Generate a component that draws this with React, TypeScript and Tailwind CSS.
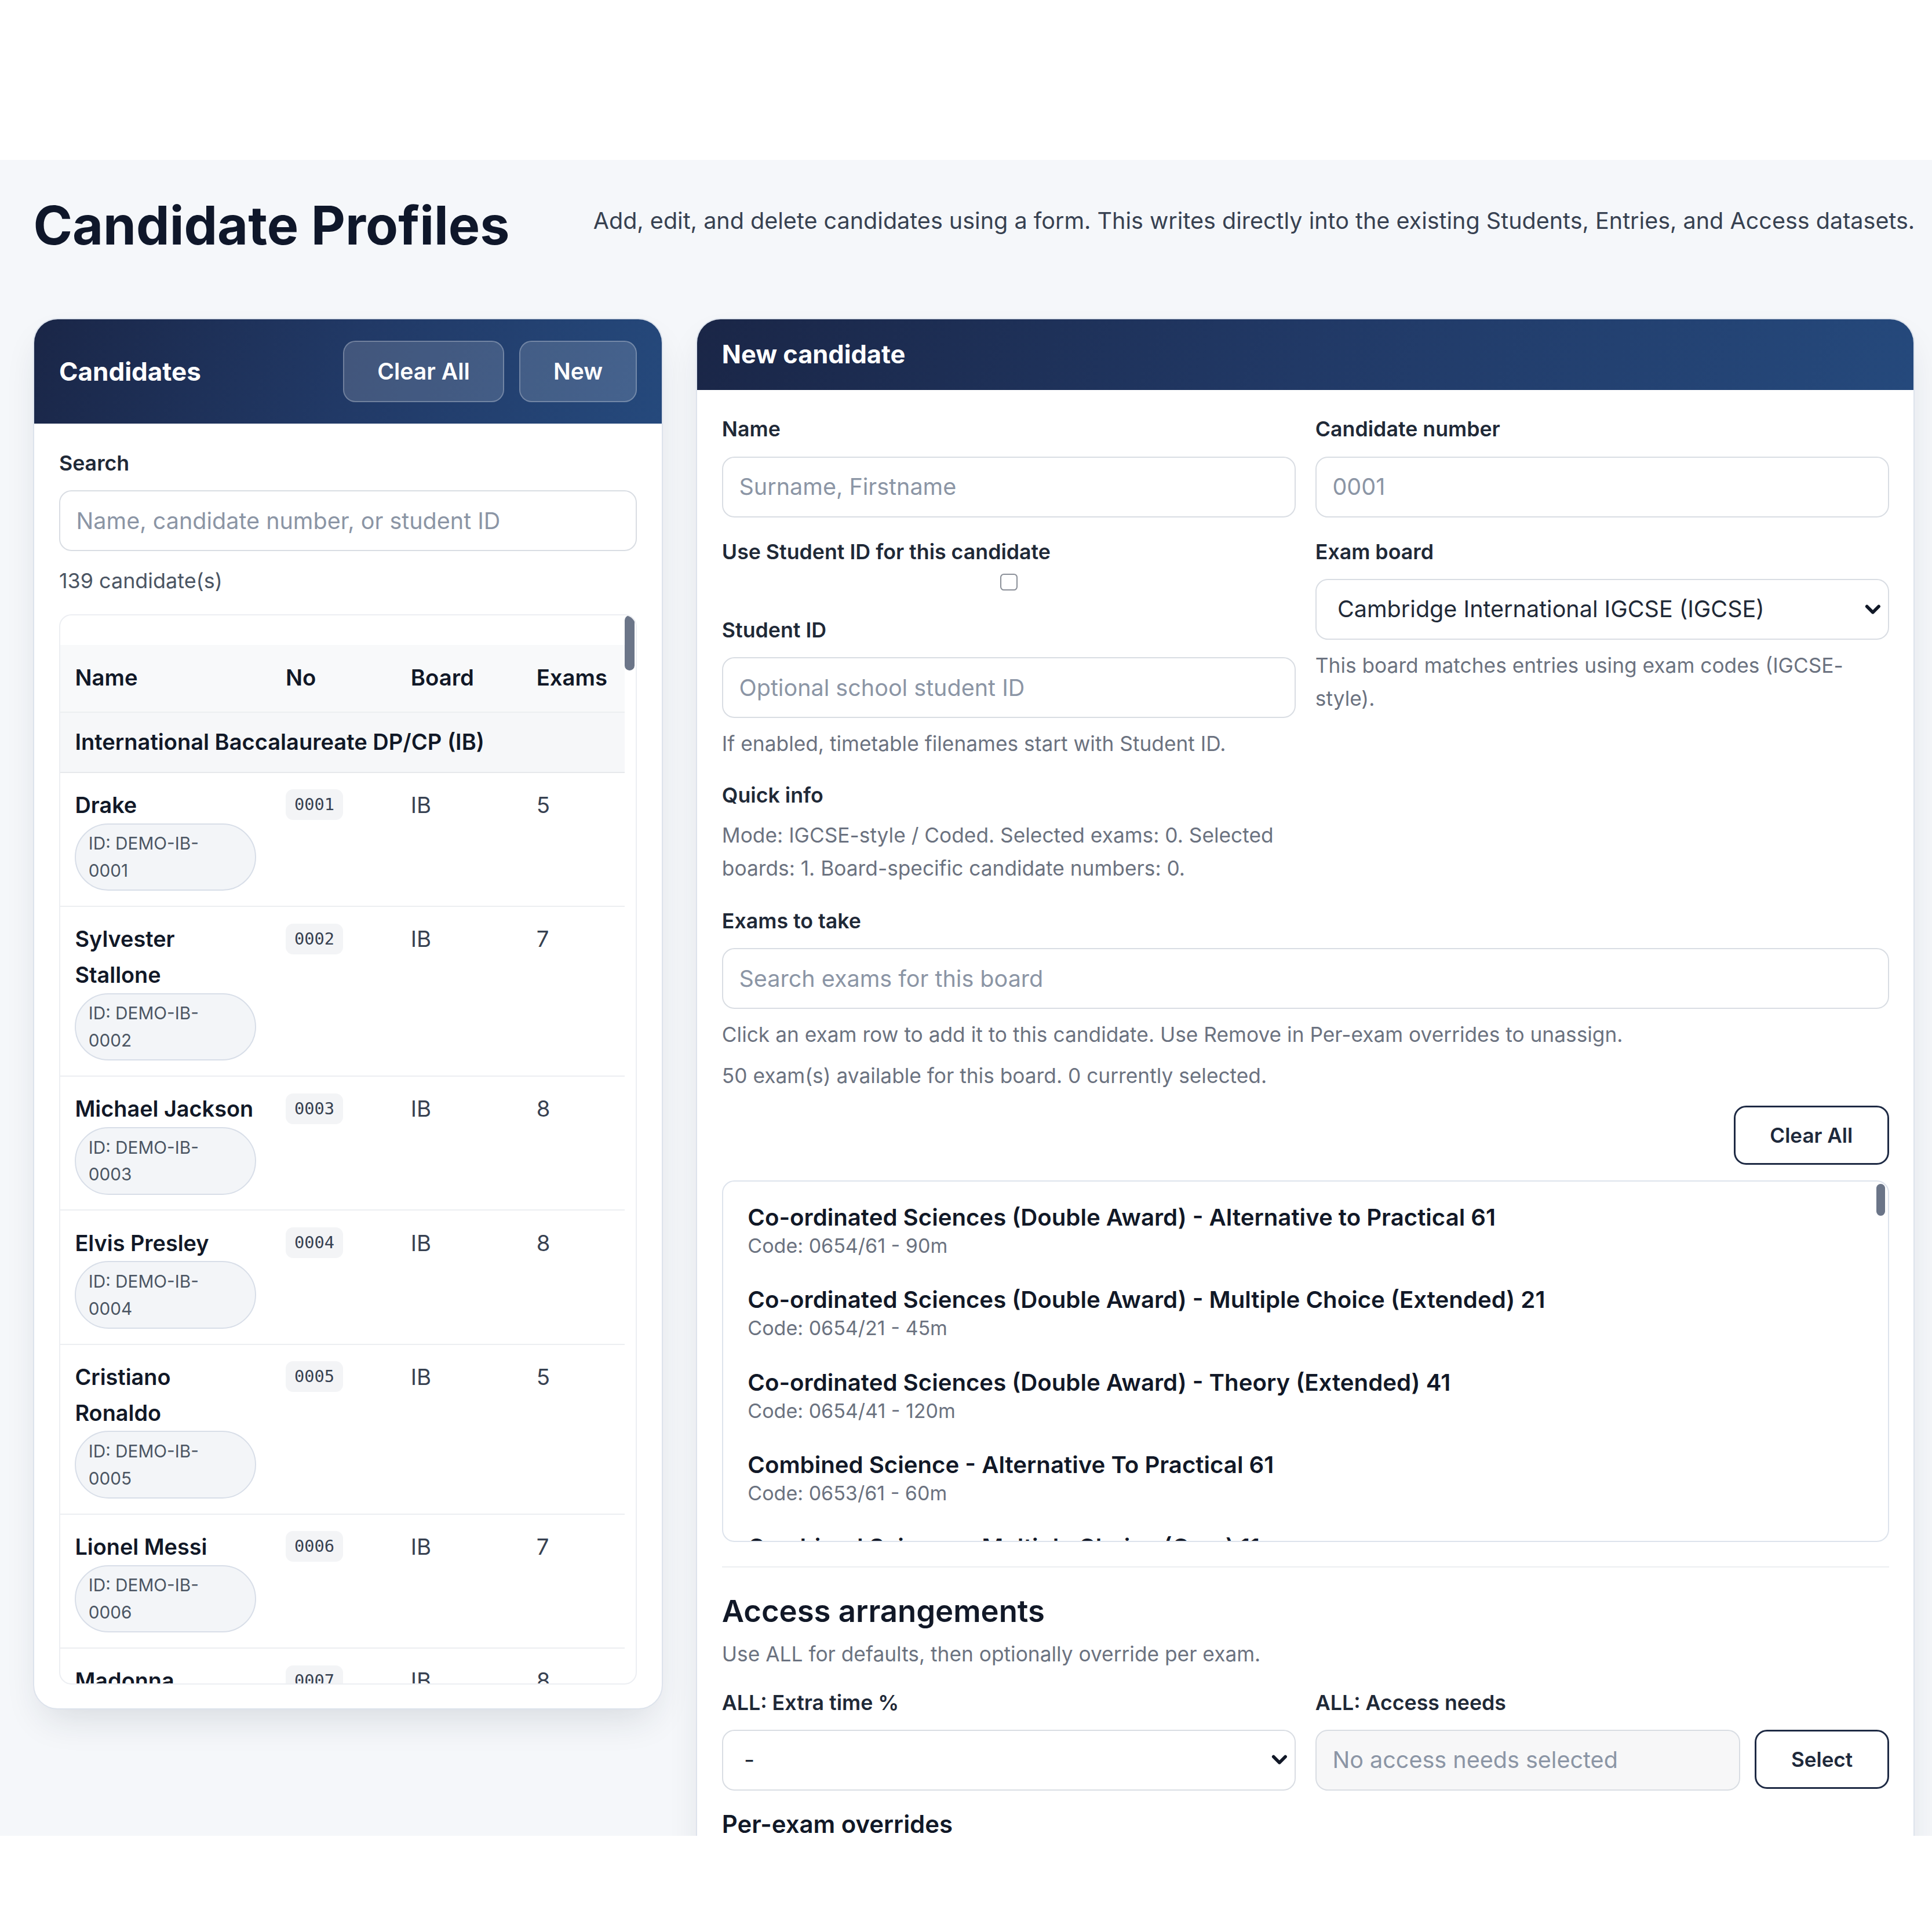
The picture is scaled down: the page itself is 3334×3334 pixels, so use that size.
import React from "react";

type Candidate = { lines: string[]; no: string; exams: number };

const CANDIDATES: Candidate[] = [
  { lines: ["Drake"], no: "0001", exams: 5 },
  { lines: ["Sylvester", "Stallone"], no: "0002", exams: 7 },
  { lines: ["Michael Jackson"], no: "0003", exams: 8 },
  { lines: ["Elvis Presley"], no: "0004", exams: 8 },
  { lines: ["Cristiano", "Ronaldo"], no: "0005", exams: 5 },
  { lines: ["Lionel Messi"], no: "0006", exams: 7 },
  { lines: ["Madonna"], no: "0007", exams: 8 },
];

const EXAMS = [
  { title: "Co-ordinated Sciences (Double Award) - Alternative to Practical 61", code: "0654/61", mins: "90m" },
  { title: "Co-ordinated Sciences (Double Award) - Multiple Choice (Extended) 21", code: "0654/21", mins: "45m" },
  { title: "Co-ordinated Sciences (Double Award) - Theory (Extended) 41", code: "0654/41", mins: "120m" },
  { title: "Combined Science - Alternative To Practical 61", code: "0653/61", mins: "60m" },
  { title: "Combined Science - Multiple Choice (Core) 11", code: "0653/11", mins: "45m" },
];

function Label({ children }: { children: React.ReactNode }) {
  return <div className="text-[16.8px] font-semibold leading-6 text-[#1f2937]">{children}</div>;
}

function TextInput({ placeholder, muted }: { placeholder: string; muted?: boolean }) {
  return (
    <input
      placeholder={placeholder}
      className={
        "mt-[10px] block h-[49.5px] w-full rounded-[10px] border border-[#d9dde3] px-[13px] text-[18.6px] text-[#1f2937] outline-none placeholder:text-[#8b95a5] " +
        (muted ? "bg-[#f7f7f8]" : "bg-white")
      }
    />
  );
}

function Chevron() {
  return (
    <svg
      className="pointer-events-none absolute right-[6px] top-1/2 -translate-y-1/2"
      width="14"
      height="10"
      viewBox="0 0 14 10"
      fill="none"
    >
      <path d="M2.2 2.4 L7 7.2 L11.8 2.4" stroke="#111827" strokeWidth="2.6" strokeLinecap="round" strokeLinejoin="round" />
    </svg>
  );
}

function SelectBox({ value }: { value: string }) {
  return (
    <div className="relative mt-[10px]">
      <select
        defaultValue={value}
        className="block h-[49.5px] w-full appearance-none rounded-[10px] border border-[#d9dde3] bg-white pl-[17px] text-[18.6px] text-[#1f2937] outline-none"
      >
        <option value={value}>{value}</option>
      </select>
      <Chevron />
    </div>
  );
}

function Help({ children, className = "" }: { children: React.ReactNode; className?: string }) {
  return <p className={"text-[16.6px] leading-[26.5px] text-[#6b7280] " + className}>{children}</p>;
}

function CardHeader({ children, className = "" }: { children: React.ReactNode; className?: string }) {
  return (
    <header
      className={
        "flex items-center bg-[linear-gradient(110deg,#1a2647_0%,#213966_50%,#25497c_100%)] px-[20px] " + className
      }
    >
      {children}
    </header>
  );
}

const cardClass =
  "overflow-hidden rounded-[20px] border border-[#dde3ec] bg-white shadow-[0_14px_30px_-8px_rgba(30,41,59,0.14)]";

function CandidatesCard() {
  const headerBtn =
    "h-[50px] rounded-[10px] border border-white/25 bg-white/15 px-[27px] text-[18.4px] font-semibold text-white";
  const th = "border-b border-[#eceef1] px-3 py-[13.5px] text-left text-lg font-semibold leading-[27px] text-[#111827]";
  const td = "border-b border-[#eceef1] px-3 py-3 align-top";
  return (
    <section className={cardClass}>
      <CardHeader className="h-[85px] justify-between">
        <h2 className="text-[20.7px] font-bold text-white">Candidates</h2>
        <div className="flex gap-3">
          <button className={headerBtn}>Clear All</button>
          <button className={headerBtn}>New</button>
        </div>
      </CardHeader>

      <div className="px-[20px] pb-[19px] pt-[20px]">
        <Label>Search</Label>
        <TextInput placeholder="Name, candidate number, or student ID" />
        <p className="mt-[12px] text-[16.9px] leading-6 text-[#4b5563]">139 candidate(s)</p>

        <div className="relative mt-[15px] h-[869px] overflow-hidden rounded-[10px] border border-[#eceef2] bg-white">
          <div className="absolute right-[1px] top-0 h-[45px] w-[8px] rounded-full bg-[#6b7588]" />
          <div className="mr-[9px] pt-[24px]">
            <table className="w-full table-fixed border-collapse">
              <colgroup>
                <col className="w-[171px]" />
                <col className="w-[101.5px]" />
                <col className="w-[102px]" />
                <col />
              </colgroup>
              <thead>
                <tr className="bg-[#f8f9fa]">
                  <th className={th}>Name</th>
                  <th className={th}>No</th>
                  <th className={th}>Board</th>
                  <th className={th}>Exams</th>
                </tr>
              </thead>
              <tbody>
                <tr className="bg-[#f6f7f9]">
                  <td
                    colSpan={4}
                    className="border-b border-[#e6e8eb] px-3 py-[10.5px] text-[17.9px] font-semibold leading-[27px] text-[#111827]"
                  >
                    International Baccalaureate DP/CP (IB)
                  </td>
                </tr>
                {CANDIDATES.map((c) => (
                  <tr key={c.no}>
                    <td className={td}>
                      <div className="text-[17.8px] font-semibold leading-[29px] text-[#111827]">
                        {c.lines.map((l) => (
                          <div key={l} className="whitespace-nowrap">
                            {l}
                          </div>
                        ))}
                      </div>
                      <div className="rounded-full border border-[#d8dee8] bg-[#f3f5f8] px-[10px] py-[4.5px] text-sm leading-[22px] text-[#4b5563]">
                        ID: DEMO-IB-
                        <br />
                        {c.no}
                      </div>
                    </td>
                    <td className={td}>
                      <span className="mt-[1.5px] block w-fit rounded-[6px] bg-[#f3f4f6] px-[7px] font-['DejaVu_Sans_Mono',monospace] text-[13.5px] leading-[25px] text-[#374151]">
                        {c.no}
                      </span>
                    </td>
                    <td className={td + " text-lg leading-[29px] text-[#374151]"}>IB</td>
                    <td className={td + " text-lg leading-[29px] text-[#374151]"}>{c.exams}</td>
                  </tr>
                ))}
              </tbody>
            </table>
          </div>
        </div>
      </div>
    </section>
  );
}

function NewCandidateCard() {
  const outlineBtn =
    "h-[48px] rounded-[10px] border-[1.5px] border-[#1e2a44] bg-white px-[28px] text-[16.5px] font-semibold text-[#1e293b]";
  return (
    <section className={cardClass}>
      <CardHeader className="h-[57.5px]">
        <h2 className="text-[20.4px] font-bold text-white">New candidate</h2>
      </CardHeader>

      <div className="px-[20px] pb-[40px] pt-[20px]">
        <div className="grid grid-cols-2 gap-4">
          <div>
            <Label>Name</Label>
            <TextInput placeholder="Surname, Firstname" />
          </div>
          <div>
            <Label>Candidate number</Label>
            <TextInput placeholder="0001" />
          </div>

          <div>
            <Label>Use Student ID for this candidate</Label>
            <div className="flex justify-center pt-[5.5px]">
              <input
                type="checkbox"
                className="block h-[14px] w-[14px] appearance-none rounded-[3px] border border-[#8a8f98] bg-white"
              />
            </div>
            <div className="mt-[20px]">
              <Label>Student ID</Label>
              <TextInput placeholder="Optional school student ID" />
              <Help className="mt-2">If enabled, timetable filenames start with Student ID.</Help>
            </div>
          </div>
          <div>
            <Label>Exam board</Label>
            <SelectBox value="Cambridge International IGCSE (IGCSE)" />
            <Help className="mt-2">This board matches entries using exam codes (IGCSE-style).</Help>
          </div>

          <div>
            <Label>Quick info</Label>
            <p className="mt-[7px] text-[16.6px] leading-[27px] text-[#6b7280]">
              Mode: IGCSE-style / Coded. Selected exams: 0. Selected boards: 1. Board-specific candidate numbers: 0.
            </p>
          </div>
        </div>

        <div className="mt-[17px]">
          <Label>Exams to take</Label>
          <TextInput placeholder="Search exams for this board" />
          <Help className="mt-2">
            Click an exam row to add it to this candidate. Use Remove in Per-exam overrides to unassign.
          </Help>
          <Help className="mt-[7px]">50 exam(s) available for this board. 0 currently selected.</Help>
          <div className="mt-[10.5px] flex justify-end">
            <button className={outlineBtn}>Clear All</button>
          </div>

          <div className="relative mt-[12.5px] h-[293.5px] overflow-hidden rounded-[10px] border border-[#dde3ec] bg-white p-[6px]">
            <div className="absolute right-[2px] top-[2px] h-[26px] w-[7.5px] rounded-full bg-[#6b7588]" />
            {EXAMS.map((e) => (
              <div key={e.code} className="px-[14px] py-[10px]">
                <div className="whitespace-nowrap text-[18.9px] font-semibold leading-[26px] text-[#111827]">
                  {e.title}
                </div>
                <div className="text-[16px] leading-[21px] text-[#6b7280]">
                  Code: {e.code} - {e.mins}
                </div>
              </div>
            ))}
          </div>
        </div>

        <div className="mt-[20px] border-t border-[#eceef1]" />

        <h3 className="mt-[19px] text-[24.75px] font-semibold leading-8 text-[#111827]">Access arrangements</h3>
        <Help className="mt-[6.5px]">Use ALL for defaults, then optionally override per exam.</Help>

        <div className="mt-[13.5px] grid grid-cols-2 gap-4">
          <div>
            <Label>ALL: Extra time %</Label>
            <SelectBox value="-" />
          </div>
          <div>
            <Label>ALL: Access needs</Label>
            <div className="flex items-start gap-3">
              <div className="flex-1">
                <TextInput placeholder="No access needs selected" muted />
              </div>
              <button className={outlineBtn + " mt-[10px]"}>Select</button>
            </div>
          </div>
        </div>

        <h4 className="mt-[13.5px] text-[19.7px] font-semibold leading-[27px] text-[#111827]">Per-exam overrides</h4>
      </div>
    </section>
  );
}

export default function App() {
  return (
    <div className="w-[1568px] bg-white font-[Inter,sans-serif] [zoom:2.12628]">
      <div className="h-[130px]" />
      <main className="h-[1360px] overflow-hidden bg-[#f5f7fa] pl-[27px] pr-[14px] pt-[28px]">
        <div className="flex h-[50px] items-center justify-between">
          <h1 className="text-[43px] font-bold leading-[50px] text-[#0f172a]">Candidate Profiles</h1>
          <p className="mb-[7px] text-[18.6px] text-[#374151]">
            Add, edit, and delete candidates using a form. This writes directly into the existing Students, Entries, and
            Access datasets.
          </p>
        </div>

        <div className="mt-[50px] grid grid-cols-[511px_1fr] items-start gap-[27px]">
          <CandidatesCard />
          <NewCandidateCard />
        </div>
      </main>
      <div className="h-[78px]" />
    </div>
  );
}
